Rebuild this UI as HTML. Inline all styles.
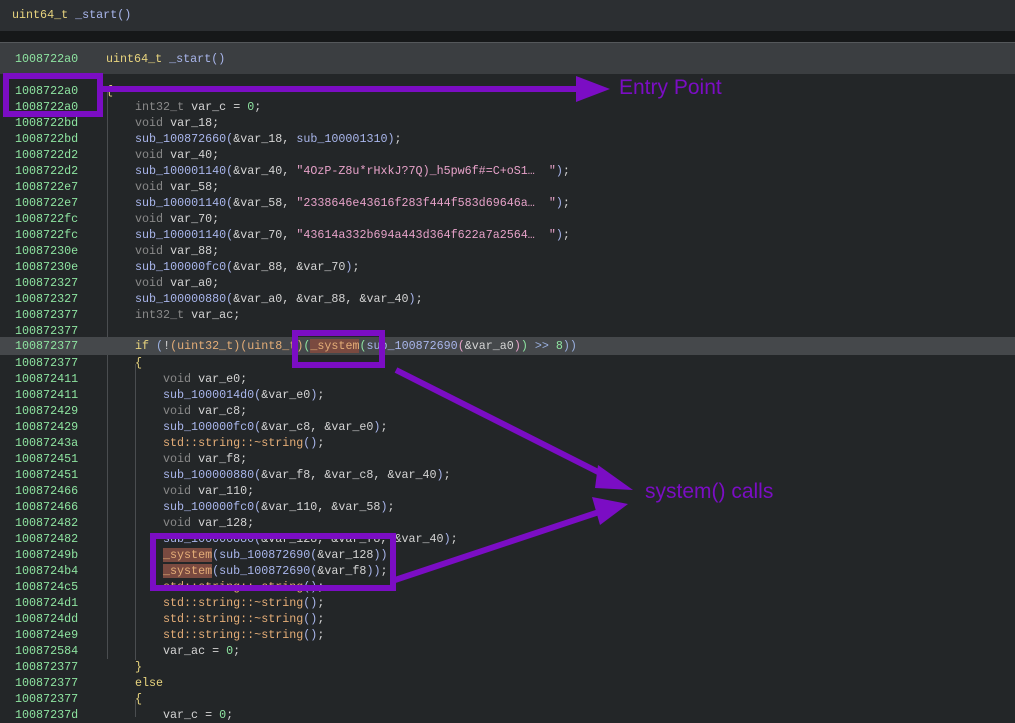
<!DOCTYPE html>
<html><head><meta charset="utf-8"><style>
body{margin:0;width:1015px;height:717px;overflow:hidden;background:#232628;font-family:"Liberation Mono",monospace;font-size:11.7px;position:relative}
.top{position:absolute;left:0;top:0;width:1015px;height:31px;background:#2c2f32;}
.top > span{position:absolute;left:12px;top:8px}
.band{position:absolute;left:0;top:31px;width:1015px;height:11px;background:#161819}
.hdr{position:absolute;left:0;top:42px;width:1015px;height:31px;background:#3b3e41;border-top:1px solid #55585b}
.hdr .a{position:absolute;left:15px;top:9px;color:#8de3a0}
.hdr .c{position:absolute;left:106px;top:9px}
.ln{position:absolute;left:0;width:1015px;height:16px;line-height:16px;white-space:pre;color:#d4d4d4}
.ln .a{position:absolute;left:15px;color:#8de3a0}
.ln .c{position:absolute}
.hl{background:#45484b}
.t{color:#8a8a8a}.f{color:#a9b6ec}.s{color:#e7a2c9}.n{color:#8de3a0}.k{color:#e8d47e}.y{color:#e4ad77}.p{color:#9ab0e0}
.sys{background:#7a4a40;color:#e4ad77}
.y2{color:#e8d47e}
.g{position:absolute;width:1px;background:#4a4d50}
.ann{position:absolute;font-family:"Liberation Sans",sans-serif;font-size:21px;color:#7b0dc4}
</style></head><body>
<div class="top"><span><span class="y2">uint64_t</span> <span class="f">_start()</span></span></div>
<div class="band"></div>
<div class="hdr"><span class="a">1008722a0</span><span class="c"><span class="y2">uint64_t</span> <span class="f">_start()</span></span></div>
<div class="g" style="left:107px;top:92px;height:567px"></div>
<div class="g" style="left:135px;top:364px;height:296px"></div>
<div class="g" style="left:135px;top:700px;height:17px"></div>

<div class="ln" style="top:83px"><span class="a">1008722a0</span><span class="c" style="left:106px"><span class="k">{</span></span></div>
<div class="ln" style="top:99px"><span class="a">1008722a0</span><span class="c" style="left:135px"><span class="t">int32_t</span> var_c = <span class="n">0</span>;</span></div>
<div class="ln" style="top:115px"><span class="a">1008722bd</span><span class="c" style="left:135px"><span class="t">void</span> var_18;</span></div>
<div class="ln" style="top:131px"><span class="a">1008722bd</span><span class="c" style="left:135px"><span class="f">sub_100872660(</span>&amp;var_18, <span class="f">sub_100001310)</span>;</span></div>
<div class="ln" style="top:147px"><span class="a">1008722d2</span><span class="c" style="left:135px"><span class="t">void</span> var_40;</span></div>
<div class="ln" style="top:163px"><span class="a">1008722d2</span><span class="c" style="left:135px"><span class="f">sub_100001140(</span>&amp;var_40, <span class="s">"4OzP-Z8u*rHxkJ?7Q)_h5pw6f#=C+oS1…  "</span><span class="f">)</span>;</span></div>
<div class="ln" style="top:179px"><span class="a">1008722e7</span><span class="c" style="left:135px"><span class="t">void</span> var_58;</span></div>
<div class="ln" style="top:195px"><span class="a">1008722e7</span><span class="c" style="left:135px"><span class="f">sub_100001140(</span>&amp;var_58, <span class="s">"2338646e43616f283f444f583d69646a…  "</span><span class="f">)</span>;</span></div>
<div class="ln" style="top:211px"><span class="a">1008722fc</span><span class="c" style="left:135px"><span class="t">void</span> var_70;</span></div>
<div class="ln" style="top:227px"><span class="a">1008722fc</span><span class="c" style="left:135px"><span class="f">sub_100001140(</span>&amp;var_70, <span class="s">"43614a332b694a443d364f622a7a2564…  "</span><span class="f">)</span>;</span></div>
<div class="ln" style="top:243px"><span class="a">10087230e</span><span class="c" style="left:135px"><span class="t">void</span> var_88;</span></div>
<div class="ln" style="top:259px"><span class="a">10087230e</span><span class="c" style="left:135px"><span class="f">sub_100000fc0(</span>&amp;var_88, &amp;var_70<span class="f">)</span>;</span></div>
<div class="ln" style="top:275px"><span class="a">100872327</span><span class="c" style="left:135px"><span class="t">void</span> var_a0;</span></div>
<div class="ln" style="top:291px"><span class="a">100872327</span><span class="c" style="left:135px"><span class="f">sub_100000880(</span>&amp;var_a0, &amp;var_88, &amp;var_40<span class="f">)</span>;</span></div>
<div class="ln" style="top:307px"><span class="a">100872377</span><span class="c" style="left:135px"><span class="t">int32_t</span> var_ac;</span></div>
<div class="ln" style="top:323px"><span class="a">100872377</span></div>
<div class="ln hl" style="top:337px;height:18px;line-height:18px"><span class="a">100872377</span><span class="c" style="left:135px"><span class="k">if</span> <span class="p">(</span>!<span class="y">(</span><span class="y">uint32_t</span><span class="y">)(</span><span class="y">uint8_t</span><span class="y">)</span><span class="n">(</span><span class="sys">_system</span><span class="n">(</span><span class="f">sub_100872690</span><span class="s">(</span>&amp;var_a0<span class="s">)</span><span class="n">)</span> <span class="p">&gt;&gt;</span> <span class="n">8</span><span class="p">))</span></span></div>
<div class="ln" style="top:355px"><span class="a">100872377</span><span class="c" style="left:135px"><span class="k">{</span></span></div>
<div class="ln" style="top:371px"><span class="a">100872411</span><span class="c" style="left:163px"><span class="t">void</span> var_e0;</span></div>
<div class="ln" style="top:387px"><span class="a">100872411</span><span class="c" style="left:163px"><span class="f">sub_1000014d0(</span>&amp;var_e0<span class="f">)</span>;</span></div>
<div class="ln" style="top:403px"><span class="a">100872429</span><span class="c" style="left:163px"><span class="t">void</span> var_c8;</span></div>
<div class="ln" style="top:419px"><span class="a">100872429</span><span class="c" style="left:163px"><span class="f">sub_100000fc0(</span>&amp;var_c8, &amp;var_e0<span class="f">)</span>;</span></div>
<div class="ln" style="top:435px"><span class="a">10087243a</span><span class="c" style="left:163px"><span class="y">std::string::~string</span><span class="f">()</span>;</span></div>
<div class="ln" style="top:451px"><span class="a">100872451</span><span class="c" style="left:163px"><span class="t">void</span> var_f8;</span></div>
<div class="ln" style="top:467px"><span class="a">100872451</span><span class="c" style="left:163px"><span class="f">sub_100000880(</span>&amp;var_f8, &amp;var_c8, &amp;var_40<span class="f">)</span>;</span></div>
<div class="ln" style="top:483px"><span class="a">100872466</span><span class="c" style="left:163px"><span class="t">void</span> var_110;</span></div>
<div class="ln" style="top:499px"><span class="a">100872466</span><span class="c" style="left:163px"><span class="f">sub_100000fc0(</span>&amp;var_110, &amp;var_58<span class="f">)</span>;</span></div>
<div class="ln" style="top:515px"><span class="a">100872482</span><span class="c" style="left:163px"><span class="t">void</span> var_128;</span></div>
<div class="ln" style="top:531px"><span class="a">100872482</span><span class="c" style="left:163px"><span class="f">sub_100000880(</span>&amp;var_128, &amp;var_f8, &amp;var_40<span class="f">)</span>;</span></div>
<div class="ln" style="top:547px"><span class="a">10087249b</span><span class="c" style="left:163px"><span class="sys">_system</span><span class="f">(sub_100872690(</span>&amp;var_128<span class="f">))</span></span></div>
<div class="ln" style="top:563px"><span class="a">1008724b4</span><span class="c" style="left:163px"><span class="sys">_system</span><span class="f">(sub_100872690(</span>&amp;var_f8<span class="f">))</span>;</span></div>
<div class="ln" style="top:579px"><span class="a">1008724c5</span><span class="c" style="left:163px"><span class="y">std::string::~string</span><span class="f">()</span>;</span></div>
<div class="ln" style="top:595px"><span class="a">1008724d1</span><span class="c" style="left:163px"><span class="y">std::string::~string</span><span class="f">()</span>;</span></div>
<div class="ln" style="top:611px"><span class="a">1008724dd</span><span class="c" style="left:163px"><span class="y">std::string::~string</span><span class="f">()</span>;</span></div>
<div class="ln" style="top:627px"><span class="a">1008724e9</span><span class="c" style="left:163px"><span class="y">std::string::~string</span><span class="f">()</span>;</span></div>
<div class="ln" style="top:643px"><span class="a">100872584</span><span class="c" style="left:163px">var_ac = <span class="n">0</span>;</span></div>
<div class="ln" style="top:659px"><span class="a">100872377</span><span class="c" style="left:135px"><span class="k">}</span></span></div>
<div class="ln" style="top:675px"><span class="a">100872377</span><span class="c" style="left:135px"><span class="k">else</span></span></div>
<div class="ln" style="top:691px"><span class="a">100872377</span><span class="c" style="left:135px"><span class="k">{</span></span></div>
<div class="ln" style="top:707px"><span class="a">10087237d</span><span class="c" style="left:163px">var_c = <span class="n">0</span>;</span></div>

<svg style="position:absolute;left:0;top:0" width="1015" height="717">
<g fill="none" stroke="#7b0dc4" stroke-width="6">
<rect x="6" y="76" width="94" height="38"/>
<rect x="295" y="333" width="87" height="32"/>
<rect x="153" y="536" width="240" height="52"/>
<line x1="103" y1="89" x2="580" y2="89"/>
<line x1="396" y1="370" x2="610" y2="478"/>
<line x1="395" y1="580" x2="605" y2="510"/>
</g>
<g fill="#7b0dc4">
<polygon points="576,76 610,89 576,102"/>
<polygon points="598,465 633,490 595,488"/>
<polygon points="592,497 628,504 600,525"/>
</g>
</svg>
<div class="ann" style="left:619px;top:76px">Entry Point</div>
<div class="ann" style="left:645px;top:480px">system() calls</div>
</body></html>
